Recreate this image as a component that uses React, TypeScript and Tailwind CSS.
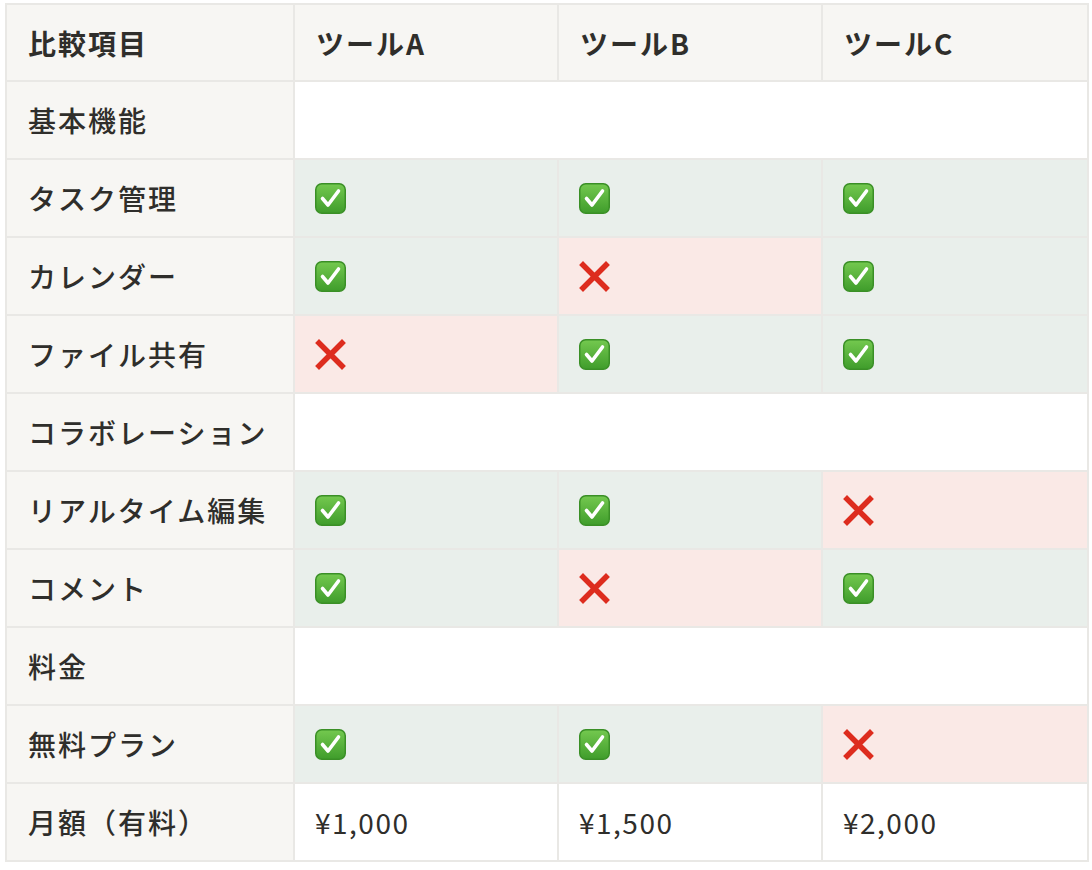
import React from "react";

type Cell = "ok" | "ng" | string | null;

const Check = () => (
  <svg width="31" height="31" viewBox="0 0 31 31" className="block">
    <defs>
      <linearGradient id="gc" x1="0" y1="0" x2="0" y2="1">
        <stop offset="0" stopColor="#74c94f" />
        <stop offset="1" stopColor="#3f9c2b" />
      </linearGradient>
    </defs>
    <rect x="0.75" y="0.75" width="29.5" height="29.5" rx="6" fill="url(#gc)" stroke="#3a8f26" strokeWidth="1.5" />
    <path d="M7.5 15.5 L13 22 L23.5 8" fill="none" stroke="#ffffff" strokeWidth="3.6" strokeLinecap="round" strokeLinejoin="round" />
  </svg>
);

const Cross = () => (
  <svg width="31" height="31" viewBox="0 0 31 31" className="block">
    <path d="M4 4 L27 27 M27 4 L4 27" stroke="#dd2c1e" strokeWidth="5.5" strokeLinecap="square" />
  </svg>
);

const rows: { label: string; cells: Cell[] | null }[] = [
  { label: "基本機能", cells: null },
  { label: "タスク管理", cells: ["ok", "ok", "ok"] },
  { label: "カレンダー", cells: ["ok", "ng", "ok"] },
  { label: "ファイル共有", cells: ["ng", "ok", "ok"] },
  { label: "コラボレーション", cells: null },
  { label: "リアルタイム編集", cells: ["ok", "ok", "ng"] },
  { label: "コメント", cells: ["ok", "ng", "ok"] },
  { label: "料金", cells: null },
  { label: "無料プラン", cells: ["ok", "ok", "ng"] },
  { label: "月額（有料）", cells: ["¥1,000", "¥1,500", "¥2,000"] },
];

export default function App() {
  return (
    <div
      className="bg-white min-h-[870px] pt-[3px] pl-[5px] text-[#2f2e2b]"
      style={{ fontFamily: '"Noto Sans CJK JP", "Noto Sans", sans-serif' }}
    >
      <table className="border-collapse w-[1082px] table-fixed">
        <colgroup>
          <col className="w-[288px]" />
          <col className="w-[264px]" />
          <col className="w-[264px]" />
          <col className="w-[266px]" />
        </colgroup>
        <thead>
          <tr className="h-[77px]">
            {["比較項目", "ツールA", "ツールB", "ツールC"].map((h) => (
              <th
                key={h}
                className="border-2 border-[#e9e8e5] bg-[#f7f6f3] text-left px-[21px] text-[28px] font-bold tracking-[2px]"
              >
                {h}
              </th>
            ))}
          </tr>
        </thead>
        <tbody>
          {rows.map((r) => (
            <tr key={r.label} className="h-[78px]">
              <td className="border-2 border-[#e9e8e5] bg-[#f7f6f3] px-[21px] text-[28px] font-medium tracking-[2px] whitespace-nowrap">
                {r.label}
              </td>
              {r.cells === null ? (
                <td colSpan={3} className="border-2 border-[#e9e8e5] bg-white" />
              ) : (
                r.cells.map((c, i) => {
                  const bg =
                    c === "ok" ? "bg-[#e9efeb]" : c === "ng" ? "bg-[#fae9e6]" : "bg-white";
                  return (
                    <td
                      key={i}
                      className={`border-2 border-[#e9e8e5] ${bg} px-[20px] text-[28px] tracking-[1.5px]`}
                    >
                      {c === "ok" ? <Check /> : c === "ng" ? <Cross /> : c}
                    </td>
                  );
                })
              )}
            </tr>
          ))}
        </tbody>
      </table>
    </div>
  );
}
